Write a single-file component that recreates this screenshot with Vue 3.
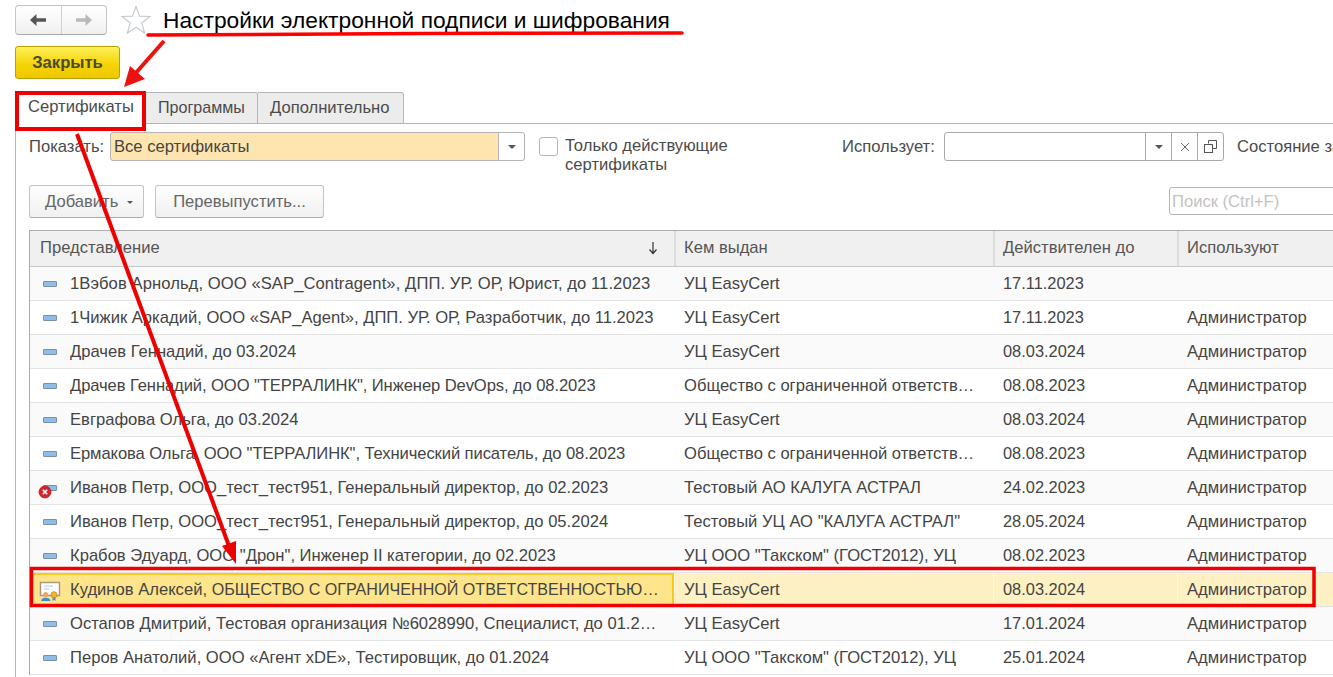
<template>
  <div class="page">
    <div class="top-bar">
      <div class="nav-group">
        <button class="nav-btn">
          <svg width="18" height="14" viewBox="0 0 18 14"><path d="M7.5 1 L1 7 L7.5 13 V8.8 H17 V5.2 H7.5 Z" fill="#555" /></svg>
        </button>
        <button class="nav-btn">
          <svg width="18" height="14" viewBox="0 0 18 14"><path d="M10.5 1 L17 7 L10.5 13 V8.8 H1 V5.2 H10.5 Z" fill="#b9b9b9" /></svg>
        </button>
      </div>
      <svg class="star" width="30" height="30" viewBox="0 0 30 30">
        <path d="M15 1.5 L18.6 11.2 L28.8 11.6 L20.8 18 L23.6 28 L15 22.3 L6.4 28 L9.2 18 L1.2 11.6 L11.4 11.2 Z" fill="#fff" stroke="#c6cbd0" stroke-width="1.2" />
      </svg>
      <h1 class="title">Настройки электронной подписи и шифрования</h1>
    </div>

    <button class="close-btn">Закрыть</button>

    <div class="tabs">
      <div v-for="(tab, i) in tabs" :key="tab" :class="['tab', { active: i === 0 }]">{{ tab }}</div>
      <div class="tabs-line"></div>
    </div>

    <div class="panel">
      <div class="filters">
        <span class="label show-label">Показать:</span>
        <div class="select-show">
          <span>Все сертификаты</span>
          <span class="select-arrow"><i class="caret"></i></span>
        </div>
        <label class="only-valid">
          <span class="checkbox"></span>
          <span>Только действующие<br />сертификаты</span>
        </label>
        <span class="label uses-label">Использует:</span>
        <div class="select-uses">
          <span class="uses-input"></span>
          <span class="uses-btn"><i class="caret"></i></span>
          <span class="uses-btn">
            <svg width="10" height="10" viewBox="0 0 10 10"><path d="M1 1 L9 9 M9 1 L1 9" stroke="#666" stroke-width="1" /></svg>
          </span>
          <span class="uses-btn">
            <svg width="13" height="13" viewBox="0 0 13 13" fill="none" stroke="#555" stroke-width="1"><path d="M4.5 3.5 V0.5 H12.5 V8.5 H8.5" /><rect x="0.5" y="4.5" width="8" height="8" /></svg>
          </span>
        </div>
        <span class="label state-label">Состояние заявления:</span>
      </div>

      <div class="actions">
        <button class="btn add-btn">Добавить <i class="caret small"></i></button>
        <button class="btn reissue-btn">Перевыпустить...</button>
        <div class="search">Поиск (Ctrl+F)</div>
      </div>

      <div class="table">
        <div class="row head">
          <div class="cell first">
            <span>Представление</span>
            <svg class="sort" width="10" height="14" viewBox="0 0 10 14"><path d="M5 1 V12 M1.5 8.5 L5 12.5 L8.5 8.5" fill="none" stroke="#333" stroke-width="1.2" /></svg>
          </div>
          <div class="cell">Кем выдан</div>
          <div class="cell">Действителен до</div>
          <div class="cell">Используют</div>
        </div>
        <div v-for="row in rows" :key="row.name + row.date" :class="['row', { selected: row.selected }]">
          <div class="cell first">
            <span class="row-icon">
              <svg v-if="row.selected" class="cert" width="22" height="22" viewBox="0 0 22 22">
                <rect x="1.5" y="3.5" width="19" height="13" fill="#fff" stroke="#a89a80" stroke-width="1.5" />
                <path d="M5 7 H14 M5 10 H10" stroke="#a9c8e6" stroke-width="1" />
                <circle cx="6.7" cy="15.7" r="2.6" fill="#e8a868" />
                <path d="M2 22 C2 17.5 11.5 17.5 11.5 22 Z" fill="#3d8fc9" />
                <path d="M13.5 17.5 V22 L15 20.8 L16.5 22 V17.5 Z" fill="#4f94cf" />
                <circle cx="15" cy="15.7" r="3" fill="#f2b431" stroke="#c98a16" stroke-width="0.8" />
              </svg>
              <template v-else>
                <span class="dash"></span>
                <svg v-if="row.expired" class="error" width="14" height="14" viewBox="0 0 14 14">
                  <circle cx="7" cy="7" r="6" fill="#d8232a" stroke="#a91c20" stroke-width="0.8" />
                  <path d="M4.8 4.8 L9.2 9.2 M9.2 4.8 L4.8 9.2" stroke="#fff" stroke-width="1.6" />
                </svg>
              </template>
            </span>
            <span :class="['ellipsis', row.fit]">{{ row.name }}<span v-if="row.caps" class="caps">{{ row.caps }}</span></span>
          </div>
          <div class="cell"><span class="ellipsis">{{ row.issuer }}</span></div>
          <div class="cell date">{{ row.date }}</div>
          <div class="cell">{{ row.user }}</div>
        </div>
      </div>
    </div>

    <svg class="marks" width="1333" height="677" viewBox="0 0 1333 677">
      <path d="M148 35 L420 33.5 L682 33" fill="none" stroke="#ff0000" stroke-width="3.5" stroke-linecap="round" />
      <path d="M164 41 L134 75" stroke="#ee1111" stroke-width="4" />
      <path d="M124 87 L130 66 L145 79 Z" fill="#ee1111" />
      <rect x="17" y="93" width="127" height="36" fill="none" stroke="#ee0000" stroke-width="4" />
      <path d="M77 134 L229 546" stroke="#ee0000" stroke-width="4" />
      <path d="M236 564 L222 546 L236 541 Z" fill="#ee0000" />
      <rect x="31.5" y="568.5" width="1282.5" height="37" fill="none" stroke="#ee0000" stroke-width="3.5" />
    </svg>
  </div>
</template>

<script setup>
const tabs = ['Сертификаты', 'Программы', 'Дополнительно']

const easy = 'УЦ EasyCert'
const company = 'Общество с ограниченной ответственностью'
const taxcom = 'УЦ ООО "Такском" (ГОСТ2012), УЦ'
const admin = 'Администратор'

const rows = [
  { name: '1Вэбов Арнольд, ООО «SAP_Contragent», ДПП. УР. ОР, Юрист, до 11.2023', issuer: easy, date: '17.11.2023', user: '', fit: 'loose' },
  { name: '1Чижик Аркадий, ООО «SAP_Agent», ДПП. УР. ОР, Разработчик, до 11.2023', issuer: easy, date: '17.11.2023', user: admin },
  { name: 'Драчев Геннадий, до 03.2024', issuer: easy, date: '08.03.2024', user: admin },
  { name: 'Драчев Геннадий, ООО "ТЕРРАЛИНК", Инженер DevOps, до 08.2023', issuer: company, date: '08.08.2023', user: admin, fit: 'tight' },
  { name: 'Евграфова Ольга, до 03.2024', issuer: easy, date: '08.03.2024', user: admin },
  { name: 'Ермакова Ольга, ООО "ТЕРРАЛИНК", Технический писатель, до 08.2023', issuer: company, date: '08.08.2023', user: admin, fit: 'tight' },
  { name: 'Иванов Петр, ООО_тест_тест951, Генеральный директор, до 02.2023', issuer: 'Тестовый АО КАЛУГА АСТРАЛ', date: '24.02.2023', user: admin, expired: true },
  { name: 'Иванов Петр, ООО_тест_тест951, Генеральный директор, до 05.2024', issuer: 'Тестовый УЦ АО "КАЛУГА АСТРАЛ"', date: '28.05.2024', user: admin },
  { name: 'Крабов Эдуард, ООО "Дрон", Инженер II категории, до 02.2023', issuer: taxcom, date: '08.02.2023', user: admin },
  { name: 'Кудинов Алексей, ', caps: 'ОБЩЕСТВО С ОГРАНИЧЕННОЙ ОТВЕТСТВЕННОСТЬЮ "ТЕРРАЛИНК"', issuer: easy, date: '08.03.2024', user: admin, selected: true },
  { name: 'Остапов Дмитрий, Тестовая организация №6028990, Специалист, до 01.2024', issuer: easy, date: '17.01.2024', user: admin },
  { name: 'Перов Анатолий, ООО «Агент xDE», Тестировщик, до 01.2024', issuer: taxcom, date: '25.01.2024', user: admin }
]
</script>

<style>
html,
body {
  margin: 0;
  background: #fff;
  overflow: hidden;
}
</style>

<style scoped>
.page {
  position: relative;
  width: 1333px;
  height: 677px;
  overflow: hidden;
  background: #fff;
  font-family: "Liberation Sans", Arial, sans-serif;
  font-size: 16.6px;
  color: #4b4b4b;
}

.top-bar {
  display: flex;
  align-items: center;
  height: 30px;
  padding: 5px 0 0 15px;
}

.nav-group {
  display: flex;
  width: 92px;
  height: 30px;
  box-sizing: border-box;
  border: 1px solid #c4c4c4;
  border-bottom-color: #a8a8a8;
  border-radius: 4px;
  background: linear-gradient(#fff, #f0f0f0);
}

.nav-btn {
  flex: 1;
  display: flex;
  align-items: center;
  justify-content: center;
  padding: 0;
  border: none;
  background: none;
}

.nav-btn + .nav-btn {
  border-left: 1px solid #d0d0d0;
}

.star {
  margin-left: 14px;
}

.title {
  margin: 0 0 0 12px;
  font-size: 22.75px;
  font-weight: 400;
  color: #000;
  white-space: nowrap;
}

.close-btn {
  display: block;
  width: 105px;
  height: 33px;
  margin: 11px 0 0 15px;
  border: 1px solid #b8a100;
  border-radius: 3px;
  background: linear-gradient(#fdf05a, #f5d200 60%, #eec700);
  font: bold 16.6px "Liberation Sans", Arial, sans-serif;
  color: #4b4b32;
}

.tabs {
  display: flex;
  align-items: flex-end;
  height: 33px;
  margin: 12px 0 0 15px;
}

.tab {
  height: 32px;
  box-sizing: border-box;
  padding: 5px 0 0 12px;
  border: 1px solid #b5b5b5;
  border-left: none;
  border-radius: 0 3px 0 0;
  background: #ececec;
  white-space: nowrap;
}

.tab:nth-child(2) {
  width: 112px;
  font-size: 16.1px;
}

.tab:nth-child(3) {
  width: 146px;
}

.tab.active {
  width: 131px;
  height: 33px;
  padding-left: 13px;
  border-bottom: none;
  background: #fff;
}

.tabs-line {
  flex: 1;
  border-bottom: 1px solid #b5b5b5;
}

.panel {
  height: 553px;
  margin-left: 15px;
  padding-left: 13px;
  border-left: 1px solid #b5b5b5;
}

.filters {
  display: flex;
  align-items: flex-start;
  height: 53px;
  padding-top: 8px;
  white-space: nowrap;
}

.filters > * {
  flex: none;
}

.label {
  line-height: 30px;
}

.show-label {
  width: 81px;
}

.select-show {
  display: flex;
  justify-content: space-between;
  width: 415px;
  height: 29px;
  box-sizing: border-box;
  padding-left: 3px;
  border: 1px solid #b5b5b5;
  border-radius: 3px;
  background: #fee4ae;
  line-height: 27px;
  color: #444;
}

.select-arrow {
  display: flex;
  align-items: center;
  justify-content: center;
  width: 26px;
  box-sizing: border-box;
  border-left: 1px solid #b5b5b5;
  border-radius: 0 3px 3px 0;
  background: #fff;
}

.caret {
  display: inline-block;
  width: 0;
  height: 0;
  border-top: 4px solid #555;
  border-left: 4px solid transparent;
  border-right: 4px solid transparent;
}

.caret.small {
  margin-left: 4px;
  vertical-align: middle;
  border-top-width: 3px;
  border-left-width: 3px;
  border-right-width: 3px;
}

.only-valid {
  display: flex;
  gap: 7px;
  width: 303px;
  margin-left: 14px;
  padding-top: 4px;
  box-sizing: border-box;
  line-height: 19px;
}

.checkbox {
  flex: none;
  width: 19px;
  height: 19px;
  box-sizing: border-box;
  margin-top: 1px;
  border: 1px solid #b5b5b5;
  border-radius: 3px;
  background: #fff;
}

.uses-label {
  width: 102px;
}

.select-uses {
  display: flex;
  width: 280px;
  height: 29px;
  box-sizing: border-box;
  border: 1px solid #a9a9a9;
  border-radius: 3px;
}

.uses-input {
  flex: 1;
}

.uses-btn {
  display: flex;
  align-items: center;
  justify-content: center;
  width: 26px;
  box-sizing: border-box;
  border-left: 1px solid #a9a9a9;
}

.state-label {
  margin-left: 13px;
}

.actions {
  display: flex;
  gap: 11px;
  width: 1310px;
  height: 33px;
}

.btn {
  height: 33px;
  box-sizing: border-box;
  padding: 0;
  border: 1px solid #c4c4c4;
  border-bottom-color: #aaa;
  border-radius: 3px;
  background: linear-gradient(#fff, #f0f0f0);
  font: 16.6px "Liberation Sans", Arial, sans-serif;
  color: #666;
  white-space: nowrap;
}

.add-btn {
  width: 115px;
  padding-left: 15px;
  text-align: left;
}

.reissue-btn {
  width: 169px;
}

.search {
  width: 170px;
  height: 28px;
  box-sizing: border-box;
  margin: 2px 0 0 auto;
  padding-left: 2px;
  border: 1px solid #b5b5b5;
  border-radius: 3px;
  line-height: 27px;
  color: #c2c2c2;
  white-space: nowrap;
}

.table {
  width: 1320px;
  margin-top: 12px;
  border-top: 1px solid #aaa;
  border-left: 1px solid #aaa;
}

.row {
  display: grid;
  grid-template-columns: 644px 319px 184px 1fr;
  grid-template-rows: 33px;
  height: 34px;
  box-sizing: border-box;
  border-bottom: 1px solid #e3e3e3;
  background: #fafafa;
  color: #444;
  line-height: 33px;
}

.row:nth-child(odd) {
  background: #fff;
}

.row.head {
  grid-template-rows: 35px;
  height: 36px;
  border-bottom-color: #c8c8c8;
  background: #f0f0f0;
  color: #555;
  line-height: 33px;
}

.head .cell {
  padding-bottom: 2px;
}

.head .cell + .cell {
  border-left: 2px solid #dcdcdc;
  padding-left: 8px;
}

.cell {
  display: flex;
  align-items: center;
  min-width: 0;
  box-sizing: border-box;
  padding: 0 13px 0 10px;
  white-space: nowrap;
}

.cell.date {
  font-size: 16.4px;
}

.ellipsis {
  overflow: hidden;
  text-overflow: ellipsis;
}

.tight {
  letter-spacing: -0.1px;
}

.loose {
  letter-spacing: 0.08px;
}

.caps {
  font-size: 16.1px;
}

.sort {
  margin-left: auto;
  margin-right: 3px;
}

.row-icon {
  position: relative;
  display: flex;
  flex: none;
  align-items: center;
  justify-content: center;
  width: 20px;
  height: 20px;
  margin-right: 10px;
}

.cert {
  flex: none;
}

.dash {
  width: 14px;
  height: 6px;
  box-sizing: border-box;
  border: 1px solid #7b8fa5;
  border-radius: 1px;
  background: #8dbdea;
}

.error {
  position: absolute;
  left: -2px;
  bottom: -1px;
}

.row.selected {
  background: #fdf1c4;
}

.selected .cell + .cell {
  border-left: 1px solid #fff8df;
  padding-left: 9px;
}

.selected .cell.first {
  border: 2px solid #fbc91d;
  background: #fee48a;
  padding: 0 11px 0 8px;
}

.marks {
  position: absolute;
  left: 0;
  top: 0;
  pointer-events: none;
}
</style>
